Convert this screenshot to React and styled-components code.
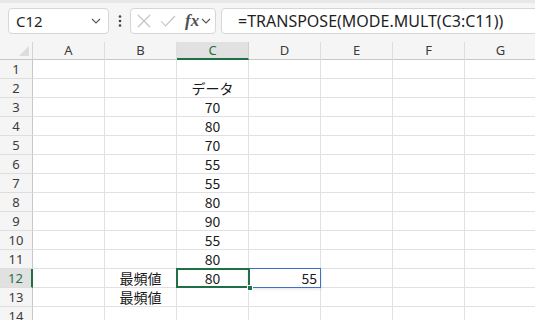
import React from "react";
import styled, { createGlobalStyle } from "styled-components";

const GlobalStyle = createGlobalStyle`
  html, body {
    margin: 0;
    padding: 0;
    background: #ffffff;
    overflow: hidden;
  }
  * { box-sizing: border-box; }
`;

const columns = ["A", "B", "C", "D", "E", "F", "G"];

// row number -> cell values by column letter
const cells = {
  2: { C: "データ" },
  3: { C: "70" },
  4: { C: "80" },
  5: { C: "70" },
  6: { C: "55" },
  7: { C: "55" },
  8: { C: "80" },
  9: { C: "90" },
  10: { C: "55" },
  11: { C: "80" },
  12: { B: "最頻値", C: "80", D: "55" },
  13: { B: "最頻値" }
};

const Page = styled.div`
  width: 535px;
  height: 320px;
  overflow: hidden;
  background: #ffffff;
  font-family: "Noto Sans", "Open Sans", sans-serif;
`;

const Toolbar = styled.div`
  height: 42px;
  background: #f5f5f5;
  border-top: 3px solid #e8e8e8;
  display: flex;
  align-items: center;
  padding: 0 0 3px 8px;
`;

const Box = styled.div`
  height: 26px;
  background: #ffffff;
  border: 1px solid #d6d6d6;
  border-radius: 4px;
  display: flex;
  align-items: center;
`;

const NameBox = styled(Box)`
  width: 101px;
  padding: 0 7px 0 7px;
  justify-content: space-between;
  font-size: 15px;
  color: #1f1f1f;
`;

const Grip = styled.div`
  width: 21px;
  display: flex;
  justify-content: center;
`;

const FuncBox = styled(Box)`
  width: 86px;
  padding: 0 0 0 6px;
  gap: 9px;
`;

const FormulaBox = styled(Box)`
  flex: 1;
  margin-left: 5px;
  margin-right: -6px;
  padding-left: 16px;
  font-size: 16px;
  color: #1f1f1f;
  white-space: nowrap;
`;

const Fx = styled.span`
  font-family: "Liberation Serif", serif;
  font-style: italic;
  font-weight: bold;
  font-size: 17px;
  color: #505050;
  display: flex;
  align-items: center;
  gap: 2px;
`;

const Grid = styled.div`
  display: grid;
  grid-template-columns: 33px repeat(7, 72px);
  grid-auto-rows: 19px;
  grid-template-rows: 18px;
`;

const Corner = styled.div`
  background: #f5f5f5;
  border-right: 1px solid #d4d4d4;
  border-bottom: 1px solid #c8c8c8;
  position: relative;
  overflow: hidden;
`;

const CornerTriangle = styled.div`
  position: absolute;
  right: 3px;
  bottom: 3px;
  width: 0;
  height: 0;
  border-left: 10px solid transparent;
  border-bottom: 10px solid #dcdcdc;
`;

const ColHeader = styled.div`
  background: ${p => (p.active ? "#e1e1e1" : "#f5f5f5")};
  border-right: 1px solid ${p => (p.active ? "#d0d0d0" : "#dedede")};
  border-bottom: ${p => (p.active ? "2px solid #1e7145" : "1px solid #c8c8c8")};
  color: ${p => (p.active ? "#1e7145" : "#3b3b3b")};
  font-size: 13px;
  display: flex;
  align-items: center;
  justify-content: center;
  line-height: 1;
  padding-top: ${p => (p.active ? "1px" : "0")};
`;

const RowHeader = styled.div`
  background: ${p => (p.active ? "#e1e1e1" : "#f5f5f5")};
  border-right: ${p => (p.active ? "2px solid #1e7145" : "1px solid #c8c8c8")};
  border-bottom: 1px solid #dedede;
  color: ${p => (p.active ? "#1e7145" : "#3b3b3b")};
  font-size: 13px;
  display: flex;
  align-items: center;
  justify-content: center;
  line-height: 1;
`;

const Cell = styled.div`
  position: relative;
  border-right: 1px solid #e1e1e1;
  border-bottom: 1px solid #e1e1e1;
  font-family: "Noto Sans CJK JP", "Noto Sans", sans-serif;
  font-size: 14px;
  color: #1a1a1a;
  display: flex;
  align-items: center;
  justify-content: ${p => p.align};
  padding: 0 3px 1px 3px;
  line-height: 1;
  white-space: nowrap;
`;

const ActiveFrame = styled.div`
  position: absolute;
  left: -1px;
  top: -1px;
  right: -2px;
  bottom: -1px;
  border: 2px solid #1e7145;
  pointer-events: none;
  z-index: 2;
`;

const FillHandle = styled.div`
  position: absolute;
  right: -5px;
  bottom: -5px;
  width: 6px;
  height: 6px;
  background: #1e7145;
  border: 1px solid #ffffff;
  z-index: 3;
`;

const SpillFrame = styled.div`
  position: absolute;
  left: -1px;
  top: -1px;
  right: -1px;
  bottom: -1px;
  border: 1px solid #3f6fc4;
  box-shadow: 0 1px 3px rgba(0, 0, 0, 0.12);
  pointer-events: none;
  z-index: 1;
`;

const Chevron = () => (
  <svg width="10" height="6" viewBox="0 0 10 6">
    <path d="M1 1 L5 5 L9 1" fill="none" stroke="#5a5a5a" strokeWidth="1.2" />
  </svg>
);

const Dots = () => (
  <svg width="4" height="12" viewBox="0 0 4 12">
    <circle cx="2" cy="1.5" r="1.3" fill="#444" />
    <circle cx="2" cy="6" r="1.3" fill="#444" />
    <circle cx="2" cy="10.5" r="1.3" fill="#444" />
  </svg>
);

const Cross = () => (
  <svg width="14" height="14" viewBox="0 0 14 14">
    <path d="M1 1 L13 13 M13 1 L1 13" stroke="#c2c2c2" strokeWidth="1.1" />
  </svg>
);

const Check = () => (
  <svg width="16" height="12" viewBox="0 0 16 12">
    <path d="M1 6 L5.5 11 L15 1" fill="none" stroke="#c2c2c2" strokeWidth="1.1" />
  </svg>
);

const alignFor = col => (col === "D" ? "flex-end" : "center");

const App = () => {
  const rows = Array.from({ length: 14 }, (_, i) => i + 1);
  return (
    <Page>
      <GlobalStyle />
      <Toolbar>
        <NameBox>
          <span>C12</span>
          <Chevron />
        </NameBox>
        <Grip>
          <Dots />
        </Grip>
        <FuncBox>
          <Cross />
          <Check />
          <Fx>
            fx
            <Chevron />
          </Fx>
        </FuncBox>
        <FormulaBox>=TRANSPOSE(MODE.MULT(C3:C11))</FormulaBox>
      </Toolbar>
      <Grid>
        <Corner>
          <CornerTriangle />
        </Corner>
        {columns.map(c => (
          <ColHeader key={c} active={c === "C"}>
            {c}
          </ColHeader>
        ))}
        {rows.map(r => (
          <React.Fragment key={r}>
            <RowHeader active={r === 12}>{r}</RowHeader>
            {columns.map(c => {
              const value = (cells[r] || {})[c];
              return (
                <Cell key={c} align={alignFor(c)}>
                  {value}
                  {r === 12 && c === "C" && (
                    <ActiveFrame>
                      <FillHandle />
                    </ActiveFrame>
                  )}
                  {r === 12 && c === "D" && <SpillFrame />}
                </Cell>
              );
            })}
          </React.Fragment>
        ))}
      </Grid>
    </Page>
  );
};

export default App;
